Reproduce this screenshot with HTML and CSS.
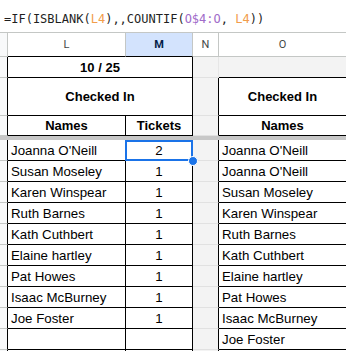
FILE: index.html
```html
<!DOCTYPE html>
<html lang="en">
  <head>
    <meta charset="UTF-8" />
    <meta name="viewport" content="width=device-width, initial-scale=1.0" />
    <title>Checked In</title>
    <link rel="stylesheet" href="styles.css">
  </head>
  <body>
    <div class="formula">
      =IF(ISBLANK(<span class="ref1">L4</span>),,COUNTIF(<span class="ref2">O$4:O</span>, <span class="ref1">L4</span>))
    </div>
    <div class="sheet">
      <div class="hd gut"></div>
      <div class="hd">L</div>
      <div class="hd sel">M</div>
      <div class="hd">N</div>
      <div class="hd last">O</div>

      <div class="gut blk"></div>
      <div class="cell bold span2">10 / 25</div>
      <div class="ncol soft"></div>
      <div class="ocol grey"></div>

      <div class="gut blk"></div>
      <div class="cell bold span2">Checked In</div>
      <div class="ncol"></div>
      <div class="cell bold ocol">Checked In</div>

      <div class="gut blk"></div>
      <div class="cell bold">Names</div>
      <div class="cell bold">Tickets</div>
      <div class="ncol"></div>
      <div class="cell bold ocol">Names</div>

      <div class="freeze"></div>

      <div class="gut blk"></div>
      <div class="cell">Joanna O'Neill</div>
      <div class="cell mid">2</div>
      <div class="ncol"></div>
      <div class="cell ocol">Joanna O'Neill</div>

      <div class="gut blk"></div>
      <div class="cell">Susan Moseley</div>
      <div class="cell mid">1</div>
      <div class="ncol"></div>
      <div class="cell ocol">Joanna O'Neill</div>

      <div class="gut blk"></div>
      <div class="cell">Karen Winspear</div>
      <div class="cell mid">1</div>
      <div class="ncol"></div>
      <div class="cell ocol">Susan Moseley</div>

      <div class="gut blk"></div>
      <div class="cell">Ruth Barnes</div>
      <div class="cell mid">1</div>
      <div class="ncol"></div>
      <div class="cell ocol">Karen Winspear</div>

      <div class="gut blk"></div>
      <div class="cell">Kath Cuthbert</div>
      <div class="cell mid">1</div>
      <div class="ncol"></div>
      <div class="cell ocol">Ruth Barnes</div>

      <div class="gut blk"></div>
      <div class="cell">Elaine hartley</div>
      <div class="cell mid">1</div>
      <div class="ncol"></div>
      <div class="cell ocol">Kath Cuthbert</div>

      <div class="gut blk"></div>
      <div class="cell">Pat Howes</div>
      <div class="cell mid">1</div>
      <div class="ncol"></div>
      <div class="cell ocol">Elaine hartley</div>

      <div class="gut blk"></div>
      <div class="cell">Isaac McBurney</div>
      <div class="cell mid">1</div>
      <div class="ncol"></div>
      <div class="cell ocol">Pat Howes</div>

      <div class="gut blk"></div>
      <div class="cell">Joe Foster</div>
      <div class="cell mid">1</div>
      <div class="ncol"></div>
      <div class="cell ocol">Isaac McBurney</div>

      <div class="gut blk"></div>
      <div class="cell"></div>
      <div class="cell mid"></div>
      <div class="ncol"></div>
      <div class="cell ocol">Joe Foster</div>

      <div class="gut blk tail"></div>
      <div class="cell tail"></div>
      <div class="cell mid tail"></div>
      <div class="ncol tail"></div>
      <div class="cell ocol tail"></div>

      <div class="active"></div>
      <div class="handle"></div>
    </div>
  </body>
</html>
```

FILE: styles.css
```css
* {
  margin: 0;
  padding: 0;
  box-sizing: border-box;
}
body {
  width: 346px;
  height: 351px;
  overflow: hidden;
  background: #ffffff;
  font-family: "Liberation Sans", Arial, sans-serif;
  font-size: 13.3px;
  color: #000000;
}

/* formula bar */
.formula {
  height: 33px;
  border-bottom: 1px solid #c4c7c5;
  padding: 11px 0 0 4px;
  font-family: "DejaVu Sans Mono", monospace;
  font-size: 12px;
  line-height: 16px;
  color: #1f1f1f;
  white-space: nowrap;
}
.ref1 {
  color: #f29d4b;
}
.ref2 {
  color: #a06bc9;
}

/* grid */
.sheet {
  position: relative;
  width: 346px;
  height: 318px;
  overflow: hidden;
  display: grid;
  grid-template-columns: 8px 118px 67px 26px 127px;
  grid-template-rows: 24px 21px 38px 20px 4px repeat(10, 21px) 1px;
}
.sheet > div {
  border-right: 1px solid #000000;
  border-bottom: 1px solid #000000;
}
.sheet > .ocol {
  border-right: none;
}
.sheet > .tail {
  border-bottom: none;
}

.hd {
  display: flex;
  align-items: center;
  justify-content: center;
  font-family: Roboto, "Liberation Sans", sans-serif;
  font-size: 11px;
  color: #444746;
  background: #ffffff;
  border-right-color: #c4c7c5 !important;
}
.hd.gut,
.hd.last,
.hd:nth-child(4) {
  border-bottom-color: #c4c7c5 !important;
}
.hd.last {
  border-right: none !important;
}
.hd.sel {
  background: #d3e3fd;
  color: #041e49;
  font-weight: 700;
}

.gut {
  background: #f8f9fa;
  border-bottom-color: #c4c7c5 !important;
}

.cell {
  display: flex;
  align-items: center;
  padding: 0 3px;
  white-space: nowrap;
  overflow: hidden;
  background: #ffffff;
}
.bold {
  font-weight: 700;
  font-size: 13px;
  justify-content: center;
}
.mid {
  justify-content: center;
}
.span2 {
  grid-column: span 2;
}

.ncol {
  background: #f3f3f3;
  border-bottom-color: #e1e1e1 !important;
}
.ncol.soft {
  border-right-color: #e6e6e6 !important;
}
.ocol.grey {
  background: #f3f3f3;
}

.freeze {
  grid-column: 1 / -1;
  background: #c7c7c7;
  border: none !important;
}

/* selection */
.sheet > .active {
  position: absolute;
  left: 125px;
  top: 107px;
  width: 68px;
  height: 21px;
  border: 2px solid #1a73e8;
}
.sheet > .handle {
  position: absolute;
  left: 188px;
  top: 123px;
  width: 10px;
  height: 10px;
  border-radius: 50%;
  background: #1a73e8;
  border: 1px solid #ffffff;
}
```
